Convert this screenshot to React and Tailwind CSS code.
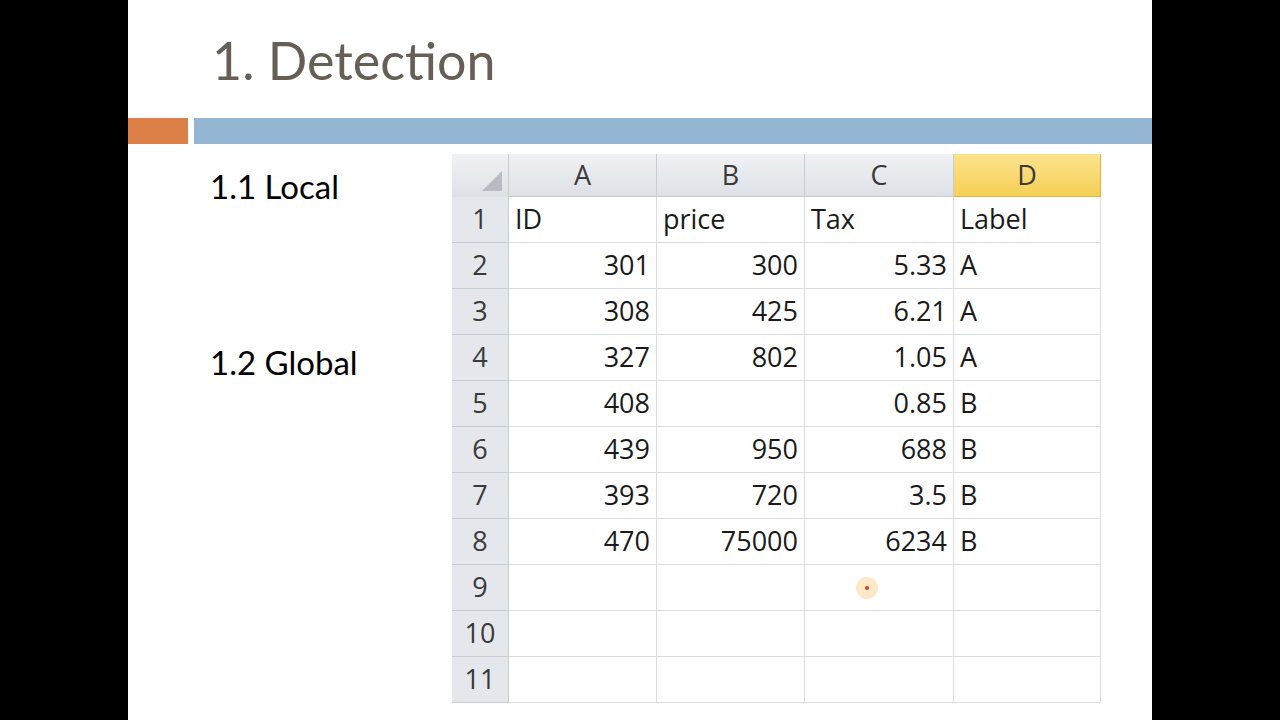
const rows = [
  ['ID', 'price', 'Tax', 'Label'],
  ['301', '300', '5.33', 'A'],
  ['308', '425', '6.21', 'A'],
  ['327', '802', '1.05', 'A'],
  ['408', '', '0.85', 'B'],
  ['439', '950', '688', 'B'],
  ['393', '720', '3.5', 'B'],
  ['470', '75000', '6234', 'B'],
  ['', '', '', ''],
  ['', '', '', ''],
  ['', '', '', ''],
];

const cols = ['A', 'B', 'C', 'D'];

export default function App() {
  return (
    <div className="flex h-[720px] w-[1280px] bg-black" style={{ fontFamily: 'Lato, "Open Sans", sans-serif' }}>
      <div className="w-[128px]" />
      <div className="relative flex w-[1024px] flex-col bg-white">
        <h1 className="pl-[84px] pt-[28px] text-[52px] leading-[64px] text-[#675e55]">1. Detection</h1>
        <div className="mt-[26px] flex h-[26px] gap-[6px]">
          <div className="w-[60px] bg-[#dd8047]" />
          <div className="flex-1 bg-[#94b6d2]" />
        </div>
        <div className="flex">
          <div className="w-[324px] pl-[82px] text-[33px] text-black">
            <p className="mt-[22px] leading-[40px]">1.1 Local</p>
            <p className="mt-[136px] leading-[40px]">1.2 Global</p>
          </div>
          <div className="mt-[10px] w-[649px] text-[27px] text-[#1a1a1a]" style={{ fontFamily: '"Open Sans", Lato, sans-serif' }}>
            <div className="grid h-[43px] grid-cols-[57px_148px_148px_149px_147px]">
              <div className="flex items-end justify-end border-r border-[#c8ccd2] bg-gradient-to-b from-[#f0f2f4] to-[#dde1e6] p-[6px]">
                <div className="h-0 w-0 border-b-[20px] border-l-[20px] border-b-[#b8bcc2] border-l-transparent" />
              </div>
              {cols.map((c) => (
                <div
                  key={c}
                  className={`flex items-center justify-center border-b border-r ${c === 'D' ? 'border-[#e2b23c] bg-gradient-to-b from-[#fbe48c] to-[#f6cf55]' : 'border-[#c8ccd2] bg-gradient-to-b from-[#f0f2f4] to-[#dde1e6]'} text-[#3a3a3a]`}
                >
                  {c}
                </div>
              ))}
            </div>
            {rows.map((r, i) => (
              <div key={i} className="grid h-[46px] grid-cols-[57px_148px_148px_149px_147px]">
                <div className="flex items-center justify-center border-b border-r border-[#c8ccd2] bg-[#e4e7eb] text-[#3a3a3a]">
                  {i + 1}
                </div>
                {r.map((v, j) => (
                  <div
                    key={j}
                    className={`flex items-center border-b border-r border-[#dadde1] px-[6px] ${i > 0 && j < 3 ? 'justify-end' : 'justify-start'}`}
                  >
                    {v}
                  </div>
                ))}
              </div>
            ))}
          </div>
        </div>
        <div className="absolute left-[728px] top-[577px] flex h-[22px] w-[22px] items-center justify-center rounded-full bg-[#fde9c8]">
          <div className="h-[4px] w-[4px] rounded-full bg-[#d0402a]" />
        </div>
      </div>
      <div className="w-[128px]" />
    </div>
  );
}
